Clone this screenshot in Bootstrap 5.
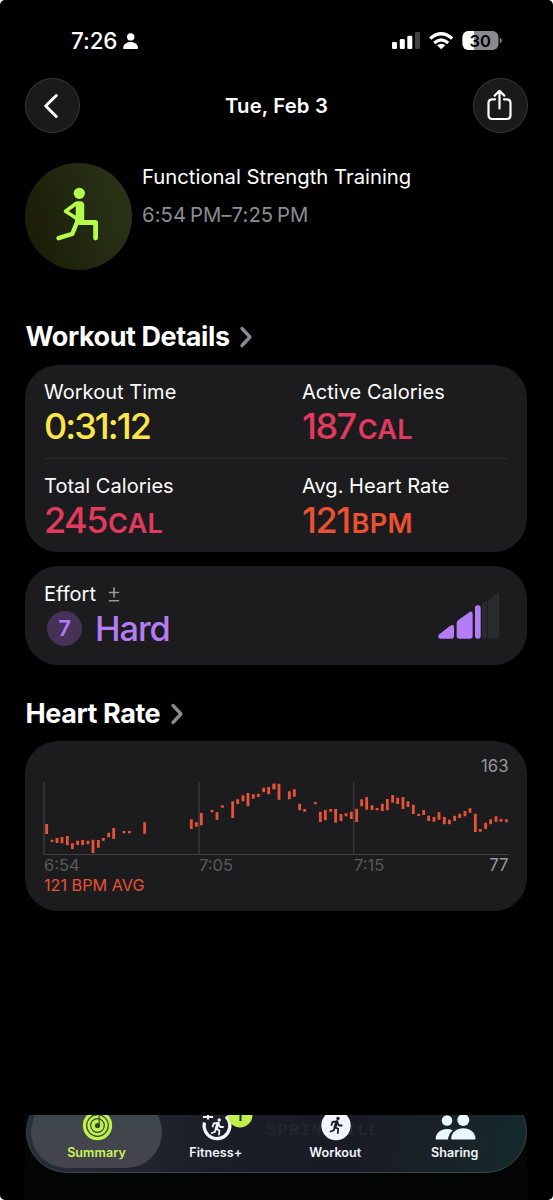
<!DOCTYPE html>
<html lang="en" data-bs-theme="dark">
<head>
<meta charset="utf-8">
<meta name="viewport" content="width=device-width, initial-scale=1">
<title>Workout Summary</title>
<link rel="stylesheet" href="https://cdn.jsdelivr.net/npm/bootstrap@5.3.0/dist/css/bootstrap.min.css">
<style>
html{background:#fff}
body{margin:0;background:#fff;font-family:Inter,"Liberation Sans",sans-serif;color:#fff;-webkit-font-smoothing:antialiased}
svg{display:block;flex:none}
.phone{width:553px;height:1200px;background:#000;border-radius:5px;overflow:hidden}
.status{height:78px;padding:4px 51px 0 71px}
.clock{font-size:22.4px;font-weight:500;letter-spacing:-.1px;line-height:1}
.titlebar{height:55px;padding:0 25px}
.round-btn{width:55px;height:55px;background:#1a1a1a;border:1px solid #383838;border-radius:50%;padding:0}
.title-text{font-size:20.3px;font-weight:600;letter-spacing:.15px;line-height:1;padding-top:2px}
.activity{height:107px;margin:30px 25px 0}
.activity-icon{width:107px;height:107px;border-radius:50%;background:linear-gradient(75deg,#1c1e07 15%,#232a11 55%,#2b3519)}
.activity-name{font-size:20.3px;line-height:28px;letter-spacing:0}
.activity-time{font-size:20.3px;line-height:28px;color:#8c8c91;margin-top:10px;letter-spacing:.08px}
.section-title{font-size:27px;font-weight:700;line-height:32px;margin:0;letter-spacing:-.42px;padding-top:1px}
.section-head{padding-left:25.5px}
.panel{width:502px;margin-left:25px;background:#1c1c1e;border-radius:33px}
.metrics{height:187px;padding:0 19px}
.metric-row{height:93px;padding-top:14px}
.metric-row+.metric-row{border-top:1px solid #2b2b2d;height:94px}
.metric-label{font-size:20px;line-height:27px;letter-spacing:.03px}
.metric-value{font-size:36px;font-weight:500;line-height:40px;letter-spacing:-1.5px}
.elapsed{letter-spacing:-1.95px}
.unit{font-size:27.2px;font-weight:600;letter-spacing:.2px;margin-left:1px}
.second-col{padding-left:26px}
.second-col .unit{margin-left:2px}
.yellow{color:#fde64b}.pink{color:#e23a5e}.orange{color:#ea5133}.purple{color:#b57cf7}
.effort{height:99px;padding:15px 27px 0 19px;margin-top:14px}
.level{width:35px;height:35px;border-radius:50%;background:#443259;font-size:22px;font-weight:600;margin-left:3px}
.effort-name{font-size:34.3px;font-weight:500;line-height:38px;letter-spacing:-1px}
.heart{height:170px;padding:15px 18.500px 0 18px}
.axis{font-size:16.5px;line-height:20px;color:#59595c;margin-top:-1px}
.bound{font-size:16.7px;line-height:20px;color:#98989d}
.avg{font-size:16.2px;line-height:20px}
.dock{height:85px;width:502px;margin:204px 0 0 25px;overflow:hidden;background:linear-gradient(#07090b,#030404 70%)}
.tabs{width:501px;height:82px;margin:-24px 0 0 1px;border:1.5px solid #3a4449;border-radius:41px;padding:4px;background:linear-gradient(100deg,#293036,#1b1e27 38%,#191b24 65%,#192327 85%,#142b2e)}
.tab{width:119.5px;height:72px;border-radius:36px;font-size:12.6px;font-weight:600;letter-spacing:.04px;padding-top:15px;line-height:16px;color:#f2f5fb}
.tab.on{width:131px;background:linear-gradient(#35494b,#42454c 60%,#45444c);color:#c9f65b}
.tab-label{margin-top:2px}
.ghost{left:239px;top:29px;font:700 17px/20px "Liberation Mono",monospace;letter-spacing:1.2px;color:#23252f}
</style>
</head>
<body>
<main class="phone">
  <div class="status d-flex align-items-center justify-content-between">
    <div class="d-flex align-items-center">
      <span class="clock">7:26</span>
      <svg width="17" height="18" viewBox="0 0 17 18" fill="#fff" style="margin-left:5px"><circle cx="8.7" cy="4.9" r="3.7"/><path d="M1.2 16.200c0-3.800 3.300-6.100 7.400-6.100s7.400 2.300 7.400 6.100q0 .8-.8.8H2q-.8 0-.8-.8Z"/></svg>
    </div>
    <svg width="111" height="20" viewBox="391 31 111 20">
      <g fill="#fff"><rect x="392" y="42" width="5" height="7" rx="1.3"/><rect x="399.8" y="39" width="5" height="10" rx="1.3"/><rect x="407.3" y="35.700" width="5" height="13.300" rx="1.3"/></g>
      <rect x="415" y="32" width="5" height="17" rx="1.300" fill="#414143"/>
      <g fill="none" stroke="#fff" stroke-width="3.300"><path d="M430.200 38.600Q441.200 28.800 452.200 38.600"/><path d="M434.200 43Q441.200 36.800 448.200 43"/></g>
      <path d="M437 45.300Q441.200 42 445.400 45.300L441.200 49.200Z" fill="#fff"/>
      <clipPath id="charge"><rect x="462" y="31" width="12" height="20"/></clipPath>
      <rect x="462.500" y="31" width="36" height="19" rx="6" fill="#8a8a8c"/>
      <rect x="462.500" y="31" width="36" height="19" rx="6" fill="#fff" clip-path="url(#charge)"/>
      <path d="M499.800 37.500q2 .8 2 3t-2 3Z" fill="#8a8a8c"/>
      <text x="480.300" y="46.500" text-anchor="middle" font-family="Inter" font-size="16.500" font-weight="600">30</text>
    </svg>
  </div>

  <header class="titlebar d-flex align-items-center justify-content-between">
    <button class="btn round-btn d-flex align-items-center justify-content-center" aria-label="Back">
      <svg width="53" height="53" viewBox="26 79 53 53" fill="none" stroke="#fff" stroke-width="3" stroke-linecap="round" stroke-linejoin="round"><path d="M56.300 95.500 45.700 106l10.600 10.500"/></svg>
    </button>
    <span class="title-text">Tue, Feb 3</span>
    <button class="btn round-btn d-flex align-items-center justify-content-center" aria-label="Share">
      <svg width="53" height="53" viewBox="474 79 53 53" fill="none" stroke="#fff" stroke-width="2.200" stroke-linecap="round" stroke-linejoin="round"><path d="M495 99.300h-2.500q-4 0-4 4v11.700q0 4 4 4h14q4 0 4-4v-11.700q0-4-4-4H504M499.500 108.500V91M494.700 95.600l4.800-4.800 4.800 4.800"/></svg>
    </button>
  </header>

  <section class="activity d-flex">
    <div class="activity-icon">
      <svg width="107" height="107" viewBox="25 163 107 107" fill="none" stroke="#b5fb4c" stroke-linecap="round" stroke-linejoin="round"><circle cx="79.300" cy="193.300" r="5.600" fill="#b5fb4c" stroke="none"/><path d="M74.500 203.500q1-1.500 3-1.500h2.500q3.500 0 3.500 3.500V220H75.500l1-5.500V206Z" fill="#b5fb4c" stroke-width="1.500"/><path d="M75.500 204 65.500 211.200 76 218" stroke-width="3.600"/><path d="M77.500 221 72.300 233.800 58.500 238.200" stroke-width="4.400"/><path d="M79.500 222.500H95.600V238" stroke-width="4.800"/></svg>
    </div>
    <div style="padding-left:10px">
      <div class="activity-name">Functional Strength Training</div>
      <div class="activity-time">6:54&#8201;PM–7:25&#8201;PM</div>
    </div>
  </section>

  <div class="section-head d-flex align-items-center" style="height:95px;padding-top:38px">
    <h2 class="section-title">Workout Details</h2>
    <svg class="ms-2" width="16" height="22" viewBox="0 0 16 22" fill="none" stroke="#8b8b8f" stroke-width="3.300" stroke-linecap="round" stroke-linejoin="round"><path d="m4 2.500 8 8.500-8 8.500"/></svg>
  </div>

  <section class="panel metrics">
    <div class="row gx-0 metric-row">
      <div class="col-6"><div class="metric-label">Workout Time</div><div class="metric-value elapsed yellow">0:31:12</div></div>
      <div class="col-6 second-col"><div class="metric-label">Active Calories</div><div class="metric-value pink">187<span class="unit">CAL</span></div></div>
    </div>
    <div class="row gx-0 metric-row">
      <div class="col-6"><div class="metric-label">Total Calories</div><div class="metric-value pink">245<span class="unit">CAL</span></div></div>
      <div class="col-6 second-col"><div class="metric-label">Avg. Heart Rate</div><div class="metric-value orange">121<span class="unit">BPM</span></div></div>
    </div>
  </section>

  <section class="panel effort d-flex justify-content-between">
    <div>
      <div class="d-flex align-items-center metric-label"><span>Effort</span>
        <svg width="20" height="20" viewBox="0 0 20 20" fill="none" stroke="#98989d" stroke-width="1.600" stroke-linecap="round" style="margin-left:9px"><path d="M4.500 7.500h9M9 3v9M4.500 15.700h9"/></svg></div>
      <div class="d-flex align-items-center" style="padding-top:1px">
        <span class="level purple d-flex align-items-center justify-content-center">7</span>
        <span class="effort-name purple" style="margin-left:13px;padding-top:1px">Hard</span>
      </div>
    </div>
    <svg width="62" height="50" viewBox="438 590 62 50" style="margin-top:9px">
      <g fill="#2a2a2e"><path d="M476.500 609.500 484 602q3-2 3 2v32q0 2.500-2.500 2.500h-8Z"/><path d="M488 602.500q0-2 1.500-3l7.500-6.500q2.200-1.500 2.200 1V636q0 2.500-2.500 2.500H490.500q-2.500 0-2.500-2.500Z"/></g>
      <rect x="474" y="604" width="7.800" height="35" fill="#1c1c1e"/>
      <g fill="#b57cf7" transform="translate(400 560) scale(.33333)"><path d="M118 223 149 199Q162 189 162 202V228Q162 236 154 236H121Q110 235 118 223Z"/><path d="M170 190Q170 184 175 180L206 158Q218 149 218 163V228Q218 236 210 236H178Q170 236 170 228Z"/><rect x="225" y="136" width="17" height="100" rx="8"/></g>
    </svg>
  </section>

  <div class="section-head d-flex align-items-center" style="height:76px;padding-top:21px">
    <h2 class="section-title">Heart Rate</h2>
    <svg width="16" height="22" viewBox="0 0 16 22" fill="none" stroke="#8b8b8f" stroke-width="3.300" stroke-linecap="round" stroke-linejoin="round" style="margin-left:9px"><path d="m4 2.500 8 8.500-8 8.500"/></svg>
  </div>

  <section class="panel heart">
    <div class="bound text-end">163</div>
    <svg width="466" height="76" viewBox="43 780 466 76" style="margin-top:4px">
      <path d="M44 782V854.500H509M199 782V854M353.800 782V854" fill="none" stroke="#404042" stroke-width="1.200"/>
      <g fill="none" stroke="#e7533a" stroke-width="8.500">
        <path transform="translate(20 730) scale(.33333)" d="M80 282V312M96 329V336M111 324V339M126 321V340M142 318V346M157 340V357M173 332V345M188 330V345M204 332V343M219 329V369M235 330V353M250 324V332M266 308V322M281 294V327M312 303V310M328 303V310M374 277V311M514 268V297M529 277V290M544 249V286M576 240V247M591 247V269M607 226V233M638 214V264M653 208V222M669 196V214M684 189V229M700 193V206M715 191V201M731 173V187M746 171V193M762 161V178M777 161V209"/>
        <path transform="translate(270 730) scale(.33333)" d="M12 161V178M58 184V208M73 178V200M89 221V241M104 237V245M136 216V223M151 245V276M166 240V271M182 237V245M197 237V278M213 252V273M228 250V259M244 245V267M260 236V276M275 208V229M290 201V239M306 226V240M321 234V241M337 221V243M352 207V241M368 195V218M383 203V222M399 201V237M414 214V231M430 224V252M446 251V258M461 240V255M476 257V273M492 261V275M507 247V269M523 261V283M538 269V283M554 257V273M569 251V264M585 243V259M600 235V248M616 251V306M631 297V305M647 278V297M662 268V283M678 259V275M693 266V275M709 268V277"/>
      </g>
    </svg>
    <div class="d-flex axis">
      <span style="width:155px;padding-left:1px">6:54</span><span style="width:155px;padding-left:1px">7:05</span><span style="padding-left:1px">7:15</span><span class="bound ms-auto">77</span>
    </div>
    <div class="avg orange" style="padding-left:1px">121 BPM AVG</div>
  </section>

  <div class="dock">
    <nav class="tabs d-flex position-relative">
      <span class="ghost position-absolute">SPRINGHILL</span>
      <div class="tab on d-flex flex-column align-items-center">
        <svg width="32" height="32" viewBox="0 0 32 32"><circle cx="16.500" cy="14.500" r="14.700" fill="#c0f04e"/><g fill="none" stroke="#34443a" stroke-width="1.200"><circle cx="16.500" cy="14.500" r="10.800"/><circle cx="16.500" cy="14.500" r="6.800"/><path d="M18.200 5V14"/></g><circle cx="16.500" cy="14.500" r="2.600" fill="#34443a"/></svg>
        <span class="tab-label">Summary</span>
      </div>
      <div class="tab d-flex flex-column align-items-center position-relative" style="margin-left:-6px">
        <svg width="56" height="32" viewBox="188 1110 56 32" style="overflow:visible"><path d="M226 1115.500A12.900 12.900 0 1 1 204.500 1121.500" fill="none" stroke="#f2f5fb" stroke-width="3.200"/><path d="M203 1116h10M208 1111v7.500" stroke="#f2f5fb" stroke-width="2.200"/><g color="#f2f5fb"><use href="#runner" x="217.200" y="1125.500"/></g><circle cx="240" cy="1114" r="12.500" fill="#c0f04e"/><path d="M240.500 1109V1120" stroke="#1c2410" stroke-width="2"/></svg>
        <span class="tab-label">Fitness+</span>
      </div>
      <div class="tab d-flex flex-column align-items-center position-relative">
        <svg width="32" height="32" viewBox="0 0 32 32"><circle cx="17" cy="14.500" r="14.700" fill="#f2f5fb"/><g color="#1a1d27"><use href="#runner" x="17" y="14"/></g></svg>
        <span class="tab-label">Workout</span>
      </div>
      <div class="tab d-flex flex-column align-items-center position-relative">
        <svg width="42" height="32" viewBox="434 1110 42 32" fill="#e9f8fa"><circle cx="447" cy="1119.500" r="5.300"/><circle cx="463.300" cy="1119" r="6"/><path d="M437 1138.500c-1 0-1.500-.5-1.300-1.500.8-5.500 5-9 11.300-9q3.200 0 5.700 1.300-4 3.500-4.700 9.200Z"/><path d="M452.500 1138.500q-1.600 0-1.400-1.600c.8-5.800 5.600-9.600 12.200-9.600s11.400 3.800 12.200 9.600q.2 1.600-1.400 1.600Z"/></svg>
        <span class="tab-label">Sharing</span>
      </div>
    </nav>
  </div>
</main>
<svg width="0" height="0" class="position-absolute"><defs>
  <g id="runner" fill="none" stroke="currentColor" stroke-width="1.800" stroke-linecap="round" stroke-linejoin="round"><circle cx="2" cy="-6.500" r="1.700" fill="currentColor" stroke="none"/><path d="M1-3.300-1 2" stroke-width="3"/><path d="M.5-3.500-3.500-3-4.500 0M1.500-2 3 .5H5.800M-1 2 2.200 4 1.800 8M-1.300 3-2.500 5.500-5.500 6.500"/></g>
</defs></svg>
<script src="https://cdn.jsdelivr.net/npm/bootstrap@5.3.0/dist/js/bootstrap.bundle.min.js"></script>
</body>
</html>
